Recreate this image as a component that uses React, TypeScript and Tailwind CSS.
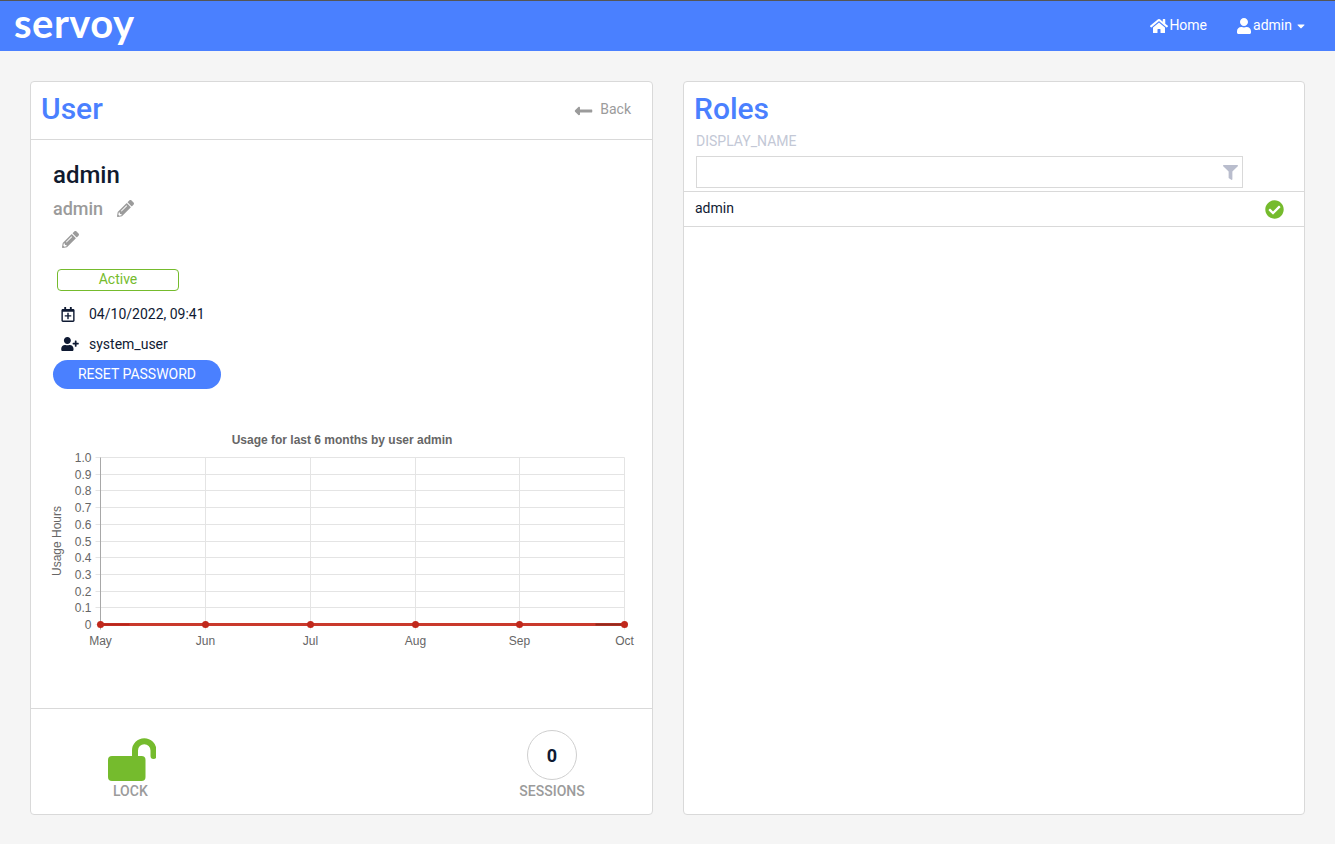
import { FaHome, FaUser, FaPencilAlt, FaUserPlus, FaRegCalendarPlus, FaLongArrowAltLeft, FaFilter, FaCheckCircle, FaCaretDown } from "react-icons/fa";

const months = ["May", "Jun", "Jul", "Aug", "Sep", "Oct"];
const ticks = ["1.0", "0.9", "0.8", "0.7", "0.6", "0.5", "0.4", "0.3", "0.2", "0.1", "0"];

// svg coords: x is page x - 31, y is page y - 434
function UsageChart() {
  const left = 69.5;
  const right = 593.5;
  const top = 23.5;
  const bottom = 190.5;
  const xs = [69.5, 174.5, 279.5, 384.5, 488.5, 593.5];
  const ys = ticks.map((_, i) => Math.round(top + ((bottom - top) * i) / 10 - 0.5) + 0.5);
  return (
    <svg width="621" height="221" className="block" style={{ fontFamily: '"Liberation Sans", Arial, sans-serif' }}>
      <text x="311" y="10" textAnchor="middle" fontSize="12" fontWeight="700" fill="#666">
        Usage for last 6 months by user admin
      </text>
      <text transform="translate(30 107) rotate(-90)" textAnchor="middle" fontSize="12" fill="#666">
        Usage Hours
      </text>
      {ys.map((y, i) => (
        <g key={i}>
          <line x1={left - 5} x2={right} y1={y} y2={y} stroke="#e4e4e4" />
          <text x={left - 9} y={y + 4} textAnchor="end" fontSize="12" fill="#666">
            {ticks[i]}
          </text>
        </g>
      ))}
      {xs.map((x, i) => (
        <g key={i}>
          <line x1={x} x2={x} y1={top} y2={bottom + 5} stroke={i === 0 ? "#a8a8a8" : "#e4e4e4"} />
          <text x={x} y={bottom + 20} textAnchor="middle" fontSize="12" fill="#666">
            {months[i]}
          </text>
        </g>
      ))}
      <line x1={left} x2={right} y1={bottom} y2={bottom} stroke="#c9392c" strokeWidth="3" />
      <line x1={left} x2={left + 29} y1={bottom} y2={bottom} stroke="#b8251a" strokeWidth="2" />
      <line x1={right - 29} x2={right} y1={bottom} y2={bottom} stroke="#8f2a1e" strokeWidth="2" />
      {xs.map((x, i) => (
        <circle key={i} cx={x} cy={bottom} r="3.5" fill="#c0281c" />
      ))}
    </svg>
  );
}

function OpenLock() {
  return (
    <svg width="48" height="43" viewBox="0 0 48 43" className="block shrink-0" fill="#75bb2d">
      <rect x="0" y="18" width="37.5" height="25" rx="4" />
      <path d="M27 19V12.5a9.25 9.25 0 0 1 18.5 0V18" fill="none" stroke="#75bb2d" strokeWidth="6" strokeLinecap="round" />
    </svg>
  );
}

export default function App() {
  return (
    <div className="min-h-[844px] bg-[#f5f5f5] font-['Roboto',sans-serif] text-[14px] text-[#0f1a33]">
      {/* Top nav */}
      <nav className="flex h-[51px] items-center justify-between border-t border-[#555] bg-[#4a80ff] pl-[14px] pr-[29px] text-white">
        <div className="-mt-[7px] font-['Lato',sans-serif] text-[40px] font-bold leading-none tracking-[0.5px]">servoy</div>
        <div className="-mt-[1px] flex items-center gap-[30px] text-[14px]">
          <a className="flex items-center gap-[1px]">
            <FaHome className="h-[16px] w-[18px]" /> Home
          </a>
          <a className="flex items-center gap-[2px]">
            <FaUser className="h-[16px] w-[14px]" /> admin
            <FaCaretDown className="ml-[2px] h-[12px] w-[10px]" />
          </a>
        </div>
      </nav>

      <div className="flex gap-[30px] pl-[30px] pr-[30px] pt-[30px]">
        {/* User card */}
        <section className="flex h-[734px] w-[623px] flex-col rounded border border-[#d9d9d9] bg-white">
          <header className="flex h-[58px] shrink-0 items-center justify-between border-b border-[#d9d9d9] pb-[4px] pl-[10px] pr-[21px]">
            <h1 className="text-[30px] font-medium leading-none text-[#4a80ff]">User</h1>
            <a className="mt-[2px] flex items-center gap-[7px] text-[14px] text-[#9b9b9b]">
              <FaLongArrowAltLeft className="mt-[2px] h-[20px] w-[19px]" /> Back
            </a>
          </header>

          <div className="flex-1 pt-[21px]">
            <div className="pl-[22px]">
              <div className="text-[24px] font-medium leading-[28px] text-[#111a2e]">admin</div>
              <div className="mt-[7px] flex h-[24px] items-center gap-[14px] text-[18px] font-medium text-[#9b9b9b]">
                admin <FaPencilAlt className="h-[17px] w-[17px]" />
              </div>
              <div className="ml-[9px] mt-[9px] flex h-[20px] items-center text-[#9b9b9b]">
                <FaPencilAlt className="h-[17px] w-[17px]" />
              </div>
              <div className="ml-[4px] mt-[20px] flex h-[22px] w-[122px] items-center justify-center rounded border border-[#75bb2d] pb-[1px] text-[14px] text-[#75bb2d]">
                Active
              </div>
              <div className="ml-[8px] mt-[13px] flex h-[20px] items-center gap-[14px]">
                <FaRegCalendarPlus className="h-[15px] w-[14px] shrink-0" />
                <span>04/10/2022, 09:41</span>
              </div>
              <div className="ml-[8px] mt-[10px] flex h-[20px] items-center gap-[8px]">
                <FaUserPlus className="h-[14px] w-[18px] shrink-0" />
                <span className="ml-[2px]">system_user</span>
              </div>
              <button className="mt-[6px] block h-[29px] w-[168px] rounded-full bg-[#4a80ff] text-[14px] text-white">
                RESET PASSWORD
              </button>
            </div>
            <div className="mt-[45px]">
              <UsageChart />
            </div>
          </div>

          <footer className="flex h-[106px] shrink-0 border-t border-[#d9d9d9]">
            <div className="ml-[77px] flex w-[44px] flex-col items-start pt-[29px]">
              <OpenLock />
              <span className="ml-[5px] mt-[1px] text-[14px] font-medium leading-[18px] text-[#9b9b9b]">LOCK</span>
            </div>
            <div className="ml-[375px] flex w-[50px] flex-col items-center pt-[21px]">
              <div className="flex h-[50px] w-[50px] shrink-0 items-center justify-center rounded-full border border-[#cfcfcf] text-[18px] font-bold">
                0
              </div>
              <span className="mt-[2px] whitespace-nowrap text-[14px] font-medium leading-[18px] text-[#9b9b9b]">SESSIONS</span>
            </div>
          </footer>
        </section>

        {/* Roles card */}
        <section className="flex h-[734px] w-[622px] flex-col rounded border border-[#d9d9d9] bg-white">
          <h1 className="pl-[10px] pt-[12px] text-[30px] font-medium leading-[30px] text-[#4a80ff]">Roles</h1>
          <div className="mt-[8px] pl-[12px] text-[14px] leading-[18px] text-[#c3c8d6]">DISPLAY_NAME</div>
          <div className="ml-[12px] mt-[6px] flex h-[32px] w-[547px] items-center justify-end border border-[#d9d9d9] pr-[4px]">
            <FaFilter className="h-[15px] w-[15px] text-[#b9bdcd]" />
          </div>
          <div className="mt-[3px] flex h-[36px] items-center justify-between border-y border-[#d9d9d9] pl-[11px] pr-[20px]">
            <span className="-mt-[2px] text-[14px]">admin</span>
            <FaCheckCircle className="h-[19px] w-[19px] text-[#75bb2d]" />
          </div>
        </section>
      </div>
    </div>
  );
}
